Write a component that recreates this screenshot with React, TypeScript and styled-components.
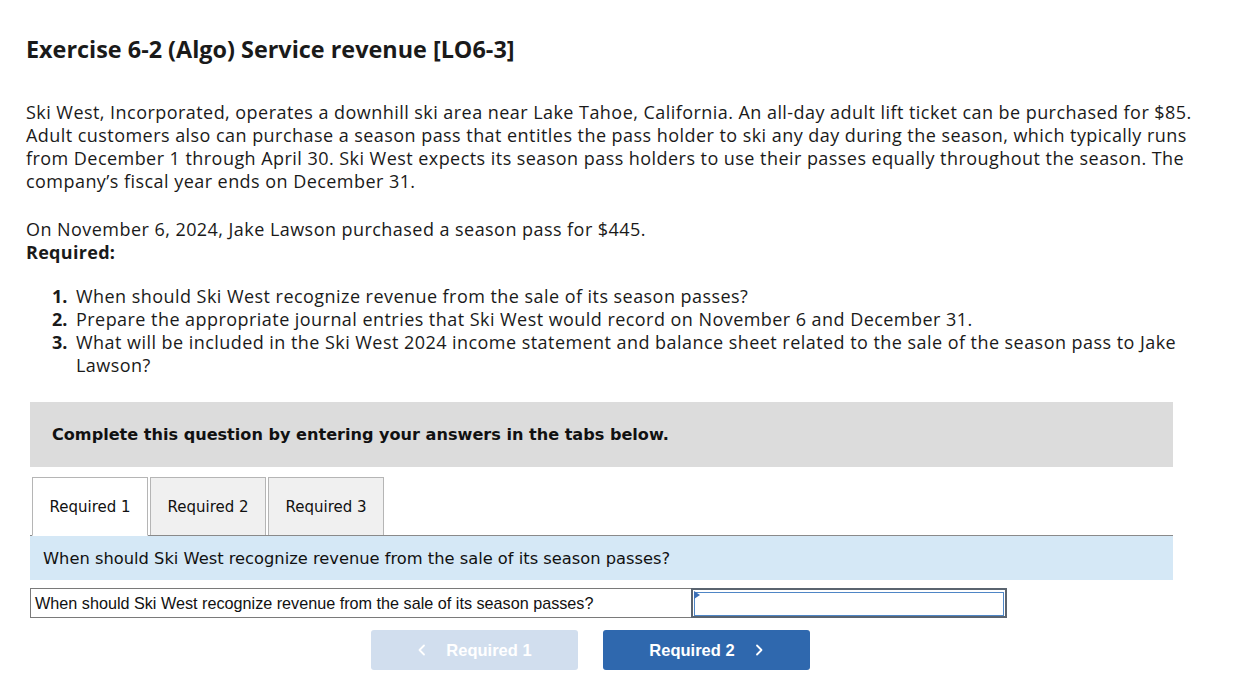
import React from "react";
import styled, { createGlobalStyle } from "styled-components";

const GlobalStyle = createGlobalStyle`
  body {
    margin: 0;
    background: #ffffff;
    font-family: "Open Sans", "Liberation Sans", sans-serif;
    color: #1a1a1a;
  }
`;

const Page = styled.div`
  padding: 34px 26px 20px 26px;
  width: 1180px;
`;

const Title = styled.h1`
  margin: 0 0 37px 0;
  font-size: 23.4px;
  font-weight: 700;
  line-height: 30px;
  color: #1a1a1a;
`;

const Para = styled.p<{ $gap?: number }>`
  margin: 0 0 ${(p) => p.$gap ?? 0}px 0;
  font-size: 18px;
  letter-spacing: 0.45px;
  line-height: 23px;
  white-space: nowrap;
`;

const Strong = styled.div`
  font-size: 18px;
  letter-spacing: 0.3px;
  line-height: 23px;
  font-weight: 700;
`;

const List = styled.ol`
  list-style: none;
  margin: 21px 0 0 0;
  padding: 0 0 0 26px;
`;

const Item = styled.li`
  display: flex;
  font-size: 18px;
  letter-spacing: 0.45px;
  line-height: 23px;
  white-space: nowrap;
`;

const Num = styled.span`
  font-weight: 700;
  width: 24px;
  letter-spacing: 0;
  flex-shrink: 0;
`;

const Panel = styled.div`
  margin: 25px 0 0 4px;
  width: 1143px;
`;

const Notice = styled.div`
  background: #dcdcdc;
  height: 65px;
  padding: 0 22px;
  display: flex;
  align-items: center;
  font-family: "DejaVu Sans", Verdana, sans-serif;
  font-weight: 700;
  font-size: 16.1px;
  color: #111;
`;

const TabBar = styled.div`
  display: flex;
  gap: 2px;
  margin-top: 10px;
  padding-left: 2px;
  border-bottom: 1px solid #8a8a8a;
`;

const Tab = styled.div<{ $active?: boolean }>`
  width: 114px;
  height: 57px;
  display: flex;
  align-items: center;
  justify-content: center;
  background: ${(p) => (p.$active ? "#ffffff" : "#f0f0f0")};
  border: 1px solid #b5b5b5;
  border-bottom: ${(p) => (p.$active ? "1px solid #ffffff" : "none")};
  margin-bottom: ${(p) => (p.$active ? "-1px" : "0")};
  font-family: "DejaVu Sans", Verdana, sans-serif;
  font-size: 15px;
  color: #111;
`;

const Question = styled.div`
  background: #d5e8f6;
  height: 44px;
  padding: 0 13px;
  display: flex;
  align-items: center;
  font-family: "DejaVu Sans", Verdana, sans-serif;
  font-size: 16.3px;
  color: #111;
`;

const AnswerRow = styled.div`
  display: flex;
  margin-top: 8px;
  height: 30px;
`;

const PromptCell = styled.div`
  width: 656px;
  border: 1px solid #7a7a7a;
  border-right: none;
  display: flex;
  align-items: center;
  padding-left: 4px;
  font-family: "Liberation Sans", Arial, sans-serif;
  font-size: 16.2px;
  color: #111;
  white-space: nowrap;
`;

const InputCell = styled.div`
  position: relative;
  width: 316px;
  border: 2px solid #5a6470;
  box-sizing: border-box;
  padding: 1px;
`;

const Input = styled.input`
  width: 100%;
  height: 100%;
  box-sizing: border-box;
  border: 1px solid #4f86c6;
  outline: none;
  margin: 0;
`;

const Flag = styled.span`
  position: absolute;
  left: 1px;
  top: 1px;
  width: 0;
  height: 0;
  border-top: 4px solid transparent;
  border-bottom: 4px solid transparent;
  border-left: 6px solid #3b6fb6;
`;

const Nav = styled.div`
  display: flex;
  justify-content: center;
  gap: 25px;
  margin-top: 12px;
  padding-right: 22px;
`;

const NavButton = styled.button<{ $disabled?: boolean }>`
  width: 207px;
  height: 40px;
  border: none;
  border-radius: 3px;
  background: ${(p) => (p.$disabled ? "#d1deee" : "#2f68ae")};
  color: #ffffff;
  font-family: "Liberation Sans", Arial, sans-serif;
  font-weight: 700;
  font-size: 16.5px;
  display: flex;
  align-items: center;
  justify-content: center;
  gap: 20px;
  cursor: ${(p) => (p.$disabled ? "default" : "pointer")};
`;

const Chevron = ({ dir }: { dir: "left" | "right" }) => (
  <svg width="9" height="14" viewBox="0 0 9 14">
    <path
      d={dir === "left" ? "M7 2.5 L2.5 7 L7 11.5" : "M2 2.5 L6.5 7 L2 11.5"}
      fill="none"
      stroke="#ffffff"
      strokeWidth="1.8"
      strokeLinecap="round"
      strokeLinejoin="round"
    />
  </svg>
);

const App = () => {
  const tabs = ["Required 1", "Required 2", "Required 3"];
  return (
    <>
      <GlobalStyle />
      <Page>
        <Title>Exercise 6-2 (Algo) Service revenue [LO6-3]</Title>
        <Para $gap={25}>
          Ski West, Incorporated, operates a downhill ski area near Lake Tahoe, California. An all-day adult lift ticket can be purchased for $85.
          <br />
          Adult customers also can purchase a season pass that entitles the pass holder to ski any day during the season, which typically runs
          <br />
          from December 1 through April 30. Ski West expects its season pass holders to use their passes equally throughout the season. The
          <br />
          company’s fiscal year ends on December 31.
        </Para>
        <Para>On November 6, 2024, Jake Lawson purchased a season pass for $445.</Para>
        <Strong>Required:</Strong>
        <List>
          <Item>
            <Num>1.</Num>
            <span>When should Ski West recognize revenue from the sale of its season passes?</span>
          </Item>
          <Item>
            <Num>2.</Num>
            <span>Prepare the appropriate journal entries that Ski West would record on November 6 and December 31.</span>
          </Item>
          <Item>
            <Num>3.</Num>
            <span>
              What will be included in the Ski West 2024 income statement and balance sheet related to the sale of the season pass to Jake
              <br />
              Lawson?
            </span>
          </Item>
        </List>
        <Panel>
          <Notice>Complete this question by entering your answers in the tabs below.</Notice>
          <TabBar>
            {tabs.map((t, i) => (
              <Tab key={t} $active={i === 0}>
                {t}
              </Tab>
            ))}
          </TabBar>
          <Question>When should Ski West recognize revenue from the sale of its season passes?</Question>
          <AnswerRow>
            <PromptCell>When should Ski West recognize revenue from the sale of its season passes?</PromptCell>
            <InputCell>
              <Input type="text" />
              <Flag />
            </InputCell>
          </AnswerRow>
          <Nav>
            <NavButton $disabled>
              <Chevron dir="left" />
              Required 1
            </NavButton>
            <NavButton>
              Required 2
              <Chevron dir="right" />
            </NavButton>
          </Nav>
        </Panel>
      </Page>
    </>
  );
};

export default App;
